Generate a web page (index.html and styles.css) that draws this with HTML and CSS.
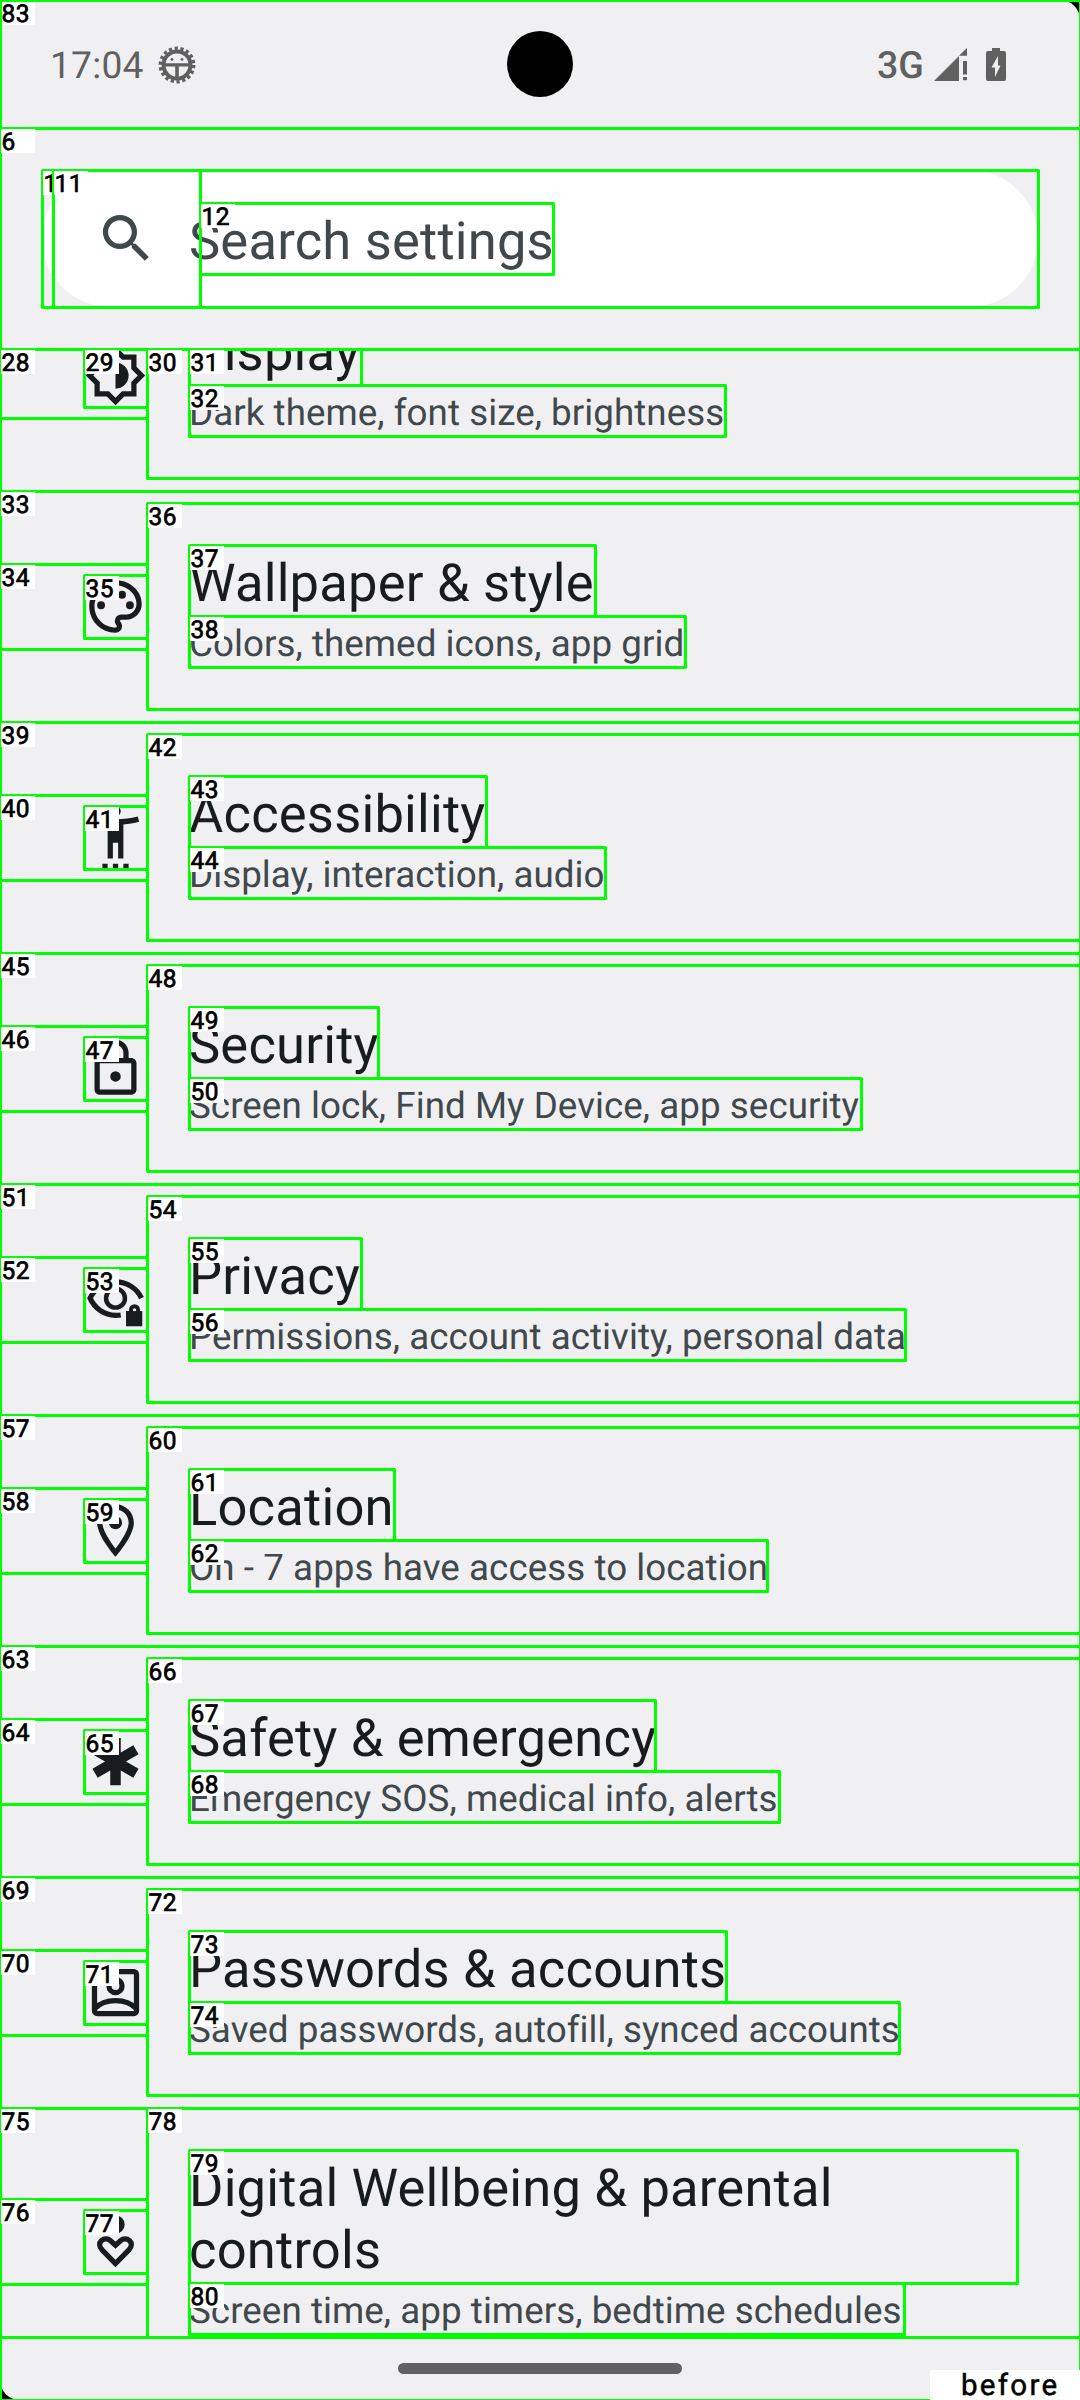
FILE: index.html
```html
<!DOCTYPE html>
<html lang="en">
<head>
<meta charset="utf-8">
<title>Settings</title>
<link rel="stylesheet" href="styles.css">
</head>
<body>
<div class="screen">
  <header class="status">
    <span class="clock">17:04</span>
    <svg class="debug" viewBox="0 0 38 38">
      <circle cx="19" cy="19" r="16.500" fill="none" stroke="currentColor" stroke-width="3.800" stroke-dasharray="3.200 2.560"/>
      <circle cx="19" cy="19" r="13.500" fill="none" stroke="currentColor" stroke-width="4"/>
      <path d="M6 17.200h26v3.400H6zM17.200 19h3.600v13h-3.600z" fill="currentColor"/>
      <circle cx="14" cy="13.400" r="1.400" fill="currentColor"/><circle cx="24" cy="13.400" r="1.400" fill="currentColor"/>
    </svg>
    <span class="camera"></span>
    <span class="network">3G</span>
    <svg class="signal" viewBox="0 0 33 33" fill="currentColor"><path d="M0 33 25 8v25zM25 7.700 33 0v7.700zM29 13h4v13.500h-4zM29 29h4v3.300h-4z"/></svg>
    <svg class="battery" viewBox="0 0 20 33"><path fill="currentColor" fill-rule="evenodd" d="M6 0h8v3h4q2 0 2 2v26q0 2-2 2H2q-2 0-2-2V5q0-2 2-2h4zM12 8 5.500 19.500H9V29l5.500-11.500H12z"/></svg>
  </header>

  <div class="search-area">
    <div class="search">
      <svg class="icon" viewBox="0 0 24 24"><path d="M15.500 14h-.79l-.28-.27A6.470 6.470 0 0 0 16 9.500 6.500 6.500 0 1 0 9.500 16c1.610 0 3.090-.59 4.230-1.570l.27.28v.79l5 4.990L20.490 19zm-6 0C7.010 14 5 11.990 5 9.500S7.010 5 9.500 5 14 7.010 14 9.500 11.990 14 9.500 14z"/></svg>
      <span class="title hint">Search settings</span>
    </div>
  </div>

  <main class="list">
    <section class="row first">
      <svg class="icon" viewBox="0 0 24 24"><path d="M20 8.690V4h-4.690L12 .69 8.690 4H4v4.690L.69 12 4 15.310V20h4.690L12 23.310 15.310 20H20v-4.690L23.310 12zm-2 5.790V18h-3.520L12 20.480 9.520 18H6v-3.520L3.520 12 6 9.520V6h3.520L12 3.520 14.480 6H18v3.520L20.480 12zM12 7v10a5 5 0 0 0 0-10z"/></svg>
      <div class="text"><div class="title">Display</div><div class="summary">Dark theme, font size, brightness</div></div>
    </section>
    <section class="row">
      <svg class="icon" viewBox="0 0 24 24"><path d="M12 22C6.490 22 2 17.510 2 12S6.490 2 12 2s10 4.040 10 9c0 3.310-2.690 6-6 6h-1.770c-.28 0-.5.22-.5.5 0 .12.05.23.13.33.41.47.64 1.060.64 1.670A2.500 2.500 0 0 1 12 22zm0-18c-4.410 0-8 3.590-8 8s3.590 8 8 8c.28 0 .5-.22.5-.5a.54.54 0 0 0-.14-.35c-.41-.46-.63-1.050-.63-1.650a2.500 2.500 0 0 1 2.500-2.500H16c2.210 0 4-1.790 4-4 0-3.860-3.590-7-8-7z"/><circle cx="6.500" cy="11.500" r="1.500"/><circle cx="9.500" cy="7.500" r="1.500"/><circle cx="14.500" cy="7.500" r="1.500"/><circle cx="17.500" cy="11.500" r="1.500"/></svg>
      <div class="text"><div class="title">Wallpaper &amp; style</div><div class="summary">Colors, themed icons, app grid</div></div>
    </section>
    <section class="row">
      <svg class="icon" viewBox="0 0 24 24"><path d="M20.500 4c-2.610.7-5.670 1-8.500 1s-5.890-.3-8.500-1L3 6c1.860.5 4 .83 6 1v13h2v-6h2v6h2V7c2-.17 4.140-.5 6-1zM12 4a2 2 0 1 0 0-4 2 2 0 0 0 0 4zM7 24h2v-2H7zM11 24h2v-2h-2zM15 24h2v-2h-2z"/></svg>
      <div class="text"><div class="title">Accessibility</div><div class="summary">Display, interaction, audio</div></div>
    </section>
    <section class="row">
      <svg class="icon" viewBox="0 0 24 24"><path d="M18 8h-1V6c0-2.760-2.240-5-5-5S7 3.240 7 6v2H6c-1.100 0-2 .9-2 2v10c0 1.100.9 2 2 2h12c1.100 0 2-.9 2-2V10c0-1.100-.9-2-2-2zM9 6c0-1.660 1.340-3 3-3s3 1.340 3 3v2H9zm9 14H6V10h12zm-6-3a2 2 0 1 0 0-4 2 2 0 0 0 0 4z"/></svg>
      <div class="text"><div class="title">Security</div><div class="summary">Screen lock, Find My Device, app security</div></div>
    </section>
    <section class="row">
      <svg class="icon" viewBox="0 0 24 24"><g fill="none" stroke="currentColor" stroke-width="2"><path d="M14 17.900c-.7.1-1.300.1-2 .1-4.200 0-7.900-2.500-9.700-6.500C4.100 7.800 7.800 5.300 12 5.300c4.400 0 8.200 2.500 9.900 6.200"/><circle cx="12" cy="11.500" r="3.600" stroke-width="1.700"/><path d="M17.900 17v-1.100a1.350 1.350 0 0 1 2.700 0V17" stroke-width="1.500"/></g><path d="M16 16.400h6.200v5.800H16z"/></svg>
      <div class="text"><div class="title">Privacy</div><div class="summary">Permissions, account activity, personal data</div></div>
    </section>
    <section class="row">
      <svg class="icon" viewBox="0 0 24 24"><path d="M12 2C8.130 2 5 5.130 5 9c0 5.250 7 13 7 13s7-7.750 7-13c0-3.870-3.130-7-7-7zM7 9c0-2.760 2.240-5 5-5s5 2.240 5 5c0 2.880-2.880 7.190-5 9.880C9.920 16.210 7 11.850 7 9z"/><circle cx="12" cy="9" r="2.500"/></svg>
      <div class="text"><div class="title">Location</div><div class="summary">On - 7 apps have access to location</div></div>
    </section>
    <section class="row">
      <svg class="icon" viewBox="0 0 24 24"><path d="M20.790 9.230l-2-3.460L14 8.540V3h-4v5.540L5.210 5.770l-2 3.460L8 12l-4.790 2.770 2 3.460L10 15.460V21h4v-5.540l4.790 2.770 2-3.460L16 12z"/></svg>
      <div class="text"><div class="title">Safety &amp; emergency</div><div class="summary">Emergency SOS, medical info, alerts</div></div>
    </section>
    <section class="row">
      <svg class="icon" viewBox="0 0 24 24"><g fill="none" stroke="currentColor" stroke-width="2"><rect x="4" y="4" width="16" height="16" rx="1"/><circle cx="12" cy="9.500" r="2.500"/><path d="M4 18.200c2-2.100 5-3.100 8-3.100s6 1 8 3.100"/></g></svg>
      <div class="text"><div class="title">Passwords &amp; accounts</div><div class="summary">Saved passwords, autofill, synced accounts</div></div>
    </section>
    <section class="row last">
      <svg class="icon" viewBox="0 0 24 24"><circle cx="12" cy="5.500" r="3.500"/><path fill="none" stroke="currentColor" stroke-width="2" d="M12 20.400 6.900 15.200C5.700 13.900 5.700 12.500 6.600 11.700c1-.9 2.500-.9 3.500 0L12 13.400l1.900-1.700c1-.9 2.500-.9 3.500 0 .9.8.9 2.200-.3 3.500z"/></svg>
      <div class="text"><div class="title">Digital Wellbeing &amp; parental controls</div><div class="summary">Screen time, app timers, bedtime schedules</div></div>
    </section>
  </main>
  <footer class="nav"><span class="handle"></span></footer>
</div>
<svg class="bounds" viewBox="0 0 1080 2400"></svg>
<div class="stage">before</div>
<script src="bounds.js"></script>
</body>
</html>
```
FILE: styles.css
```css
* { box-sizing: border-box; }
body { margin: 0; background: #000; font-family: Roboto, "Liberation Sans", sans-serif; text-rendering: geometricPrecision; }
.screen { width: 1080px; height: 2400px; display: flex; flex-direction: column; background: #f0f0f3; border-radius: 20px; overflow: hidden; color: #191c1e; }
.status { height: 128px; flex: none; display: flex; align-items: center; padding: 0 74px 0 50px; color: #606060; }
.clock { width: 108px; font-size: 37.200px; line-height: 44px; letter-spacing: 0.2px; padding-top: 4px; }
.debug { width: 38px; height: 38px; margin-top: 1px; }
.camera { width: 66px; height: 66px; border-radius: 50%; background: #000; margin-left: 311px; }
.network { margin-left: auto; font-size: 37.500px; font-weight: 500; line-height: 44px; width: 57px; padding-top: 3px; }
.signal { width: 33px; height: 33px; }
.battery { width: 20px; height: 33px; margin-left: 19px; }
.search-area { height: 221px; flex: none; padding: 42px 42px 0; }
.search { height: 137px; border-radius: 69px; background: #fff; display: flex; align-items: center; padding: 0 0 1px 53px; color: #40484c; }
.icon { width: 63px; height: 63px; flex: none; fill: currentColor; display: block; }
.title { font-size: 52.500px; line-height: 62px; letter-spacing: 0.2px; padding: 7px 0 2px; color: #191c1e; }
.hint { margin-left: 31px; padding: 7px 0 2px; color: #40484c; }
.list { height: 1988px; flex: none; overflow: hidden; }
.row { height: 231px; display: flex; padding: 54px 63px 0 84px; }
.row > .icon { margin-top: 30px; }
.text { margin-left: 42px; flex: 1; }
.summary { font-size: 36.750px; line-height: 43px; letter-spacing: 0.05px; padding: 6px 0 2px; color: #40484c; white-space: nowrap; }
.first { margin-top: -89px; }
.last { padding-top: 42px; }
.last > .icon { margin-top: 60px; }
.nav { flex: 1; display: flex; justify-content: center; padding-top: 26px; }
.handle { width: 284px; height: 11px; border-radius: 5.500px; background: #606060; }
.bounds { position: absolute; left: 0; top: 0; width: 1080px; height: 2400px; }
.bounds .box { fill: none; stroke: #0f0; stroke-width: 3; stroke-linejoin: round; }
.bounds .tag { fill: #fff; }
.bounds .num { font: 400 24.500px Roboto, sans-serif; letter-spacing: 0.6px; fill: #000; stroke: #000; stroke-width: 0.7px; }
.stage { position: absolute; left: 930px; top: 2370px; width: 150px; height: 30px; padding-left: 31px; background: #fff; color: #000; font-size: 29.500px; line-height: 33px; letter-spacing: 2.300px; font-weight: 400; -webkit-text-stroke: 0.5px #000; }
```
FILE: bounds.js
```js
// Layout bounds: [label, left, top, right, bottom], painted in order.
const boxes = [
  [83, 0, 0, 1080, 128], ["", 0, 0, 1080, 2400], [6, 0, 128, 1080, 2400],
  [10, 42, 170, 1038, 307], [11, 53, 170, 200, 307], [12, 200, 203, 553, 274],
  ["", 0, 349, 1080, 2337],
  ["", 0, 349, 1080, 491], [28, 0, 349, 147, 418], [29, 84, 349, 147, 407],
  [30, 147, 349, 1080, 478], [31, 189, 349, 361, 385], [32, 189, 385, 725, 436]
];
// Right edges of the title and summary in each full row.
const rows = [[595, 685], [486, 605], [378, 861], [361, 905], [394, 767], [655, 779], [726, 899]];
rows.forEach(([titleRight, summaryRight], i) => {
  const n = 33 + i * 6, y = 491 + i * 231;
  boxes.push(
    [n, 0, y, 1080, y + 231], [n + 1, 0, y + 73, 147, y + 158], [n + 2, 84, y + 84, 147, y + 147],
    [n + 3, 147, y + 12, 1080, y + 218], [n + 4, 189, y + 54, titleRight, y + 125],
    [n + 5, 189, y + 125, summaryRight, y + 176]);
});
boxes.push([75, 0, 2108, 1080, 2337], [76, 0, 2199, 147, 2284], [77, 84, 2210, 147, 2273],
  [78, 147, 2108, 1080, 2337], [79, 189, 2150, 1017, 2283], [80, 189, 2283, 904, 2334]);

const svg = document.querySelector(".bounds");
function add(tag, attrs, text) {
  const el = document.createElementNS("http://www.w3.org/2000/svg", tag);
  for (const k in attrs) el.setAttribute(k, attrs[k]);
  if (text !== undefined) el.textContent = text;
  svg.append(el);
}
for (const [label, x, y, r, b] of boxes) {
  add("rect", { class: "box", x: x + .5, y: y + .5, width: r - x, height: b - y });
  if (label === "") continue;
  add("rect", { class: "tag", x: x + 1, y: y + 1, width: 34, height: 24 });
  add("text", { class: "num", x: x + 1.5, y: y + 21.5 }, label);
}
```
